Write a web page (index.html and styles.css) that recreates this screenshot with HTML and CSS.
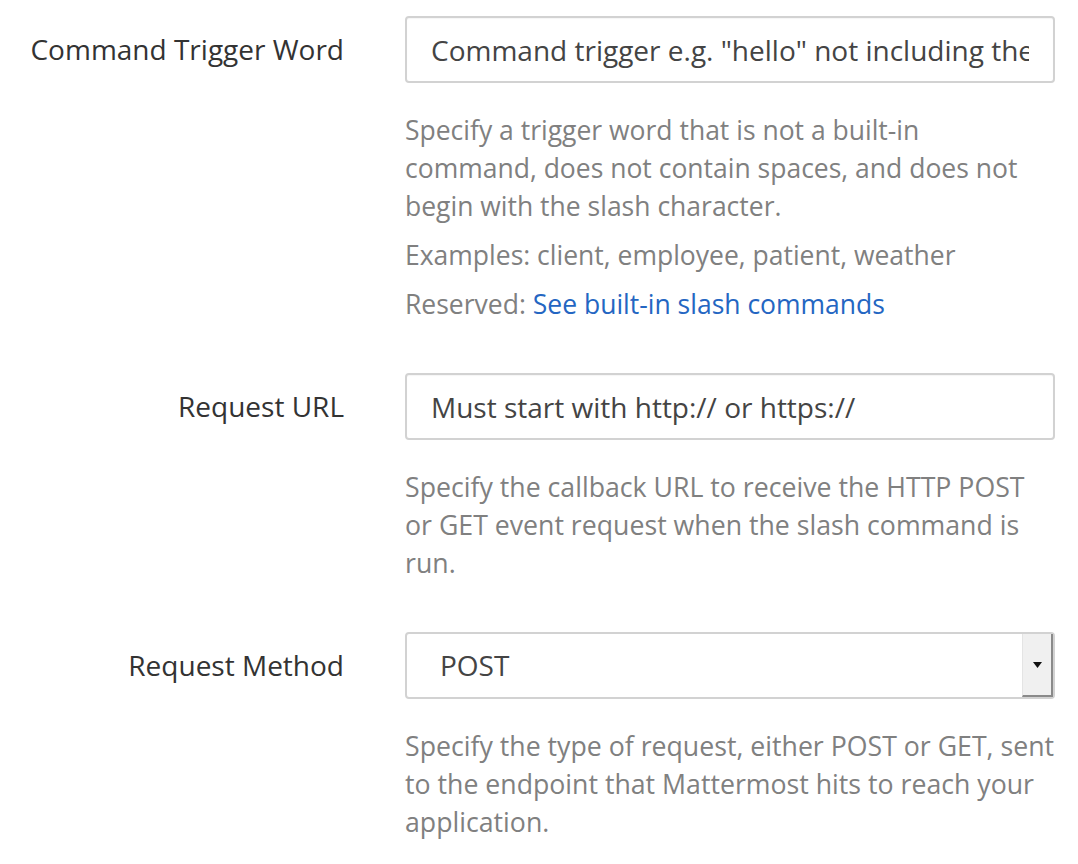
FILE: index.html
```html
<!DOCTYPE html>
<html>
<head>
<meta charset="utf-8">
<link rel="stylesheet" href="styles.css">
</head>
<body>
<div class="form">
  <div class="row">
    <label class="label">Command Trigger Word</label>
    <div class="field">
      <div class="input"><span class="input-text">Command trigger e.g. "hello" not including the slash</span></div>
      <p class="help">Specify a trigger word that is not a built-in command, does not contain spaces, and does not begin with the slash character.</p>
      <p class="help">Examples: client, employee, patient, weather</p>
      <p class="help">Reserved: <a class="link" href="#">See built-in slash commands</a></p>
    </div>
  </div>
  <div class="row">
    <label class="label">Request URL</label>
    <div class="field">
      <div class="input"><span class="input-text">Must start with http:// or https://</span></div>
      <p class="help help-lower">Specify the callback URL to receive the HTTP POST<br>or GET event request when the slash command is<br>run.</p>
    </div>
  </div>
  <div class="row">
    <label class="label">Request Method</label>
    <div class="field">
      <div class="select">
        <span class="select-value">POST</span>
        <span class="select-arrow"><svg width="9" height="6" viewBox="0 0 9 6"><path d="M0 0H9L4.5 6Z" fill="#111"/></svg></span>
      </div>
      <p class="help help-lower">Specify the type of request, either POST or GET, sent<br>to the endpoint that Mattermost hits to reach your<br>application.</p>
    </div>
  </div>
</div>
</body>
</html>
```
FILE: styles.css
```css
html, body {
  margin: 0;
  padding: 0;
  background: #fff;
}
body {
  font-family: "Open Sans", "Noto Sans", sans-serif;
  color: #333;
}
.form {
  padding-top: 16px;
  display: flex;
  flex-direction: column;
  gap: 50px;
}
.row {
  display: grid;
  grid-template-columns: 344px 650px;
  column-gap: 61px;
  align-items: start;
}
.label {
  text-align: right;
  font-size: 28px;
  line-height: 67px;
  white-space: nowrap;
  color: #333;
}
.field {
  display: flex;
  flex-direction: column;
}
.input {
  box-sizing: border-box;
  height: 67px;
  border: 2px solid #d2d2d2;
  border-radius: 4px;
  padding: 0 24px;
  display: flex;
  align-items: center;
  box-shadow: inset 0 1px 1px rgba(0,0,0,0.04);
}
.input-text {
  display: block;
  flex: 1;
  min-width: 0;
  overflow: hidden;
  white-space: nowrap;
  font-size: 28px;
  line-height: 40px;
  color: #444;
}
.help {
  margin: 0;
  font-size: 26.5px;
  line-height: 38px;
  color: #808080;
  margin-top: 11px;
}
.help-lower {
  font-size: 26.7px;
  white-space: nowrap;
}
.input + .help, .select + .help {
  margin-top: 28px;
}
.link {
  color: #2466c2;
  text-decoration: none;
}
.select {
  box-sizing: border-box;
  height: 67px;
  border: 2px solid #d2d2d2;
  border-radius: 4px;
  display: flex;
  align-items: stretch;
  font-size: 28px;
  color: #444;
}
.select-value {
  flex: 1;
  padding-left: 33px;
  line-height: 63px;
}
.select-arrow {
  width: 28px;
  background: #f0f0f0;
  border-left: 1px solid #e4e4e4;
  border-right: 2px solid #8a8a8a;
  border-bottom: 2px solid #8a8a8a;
  display: flex;
  align-items: center;
  justify-content: center;
}
```
